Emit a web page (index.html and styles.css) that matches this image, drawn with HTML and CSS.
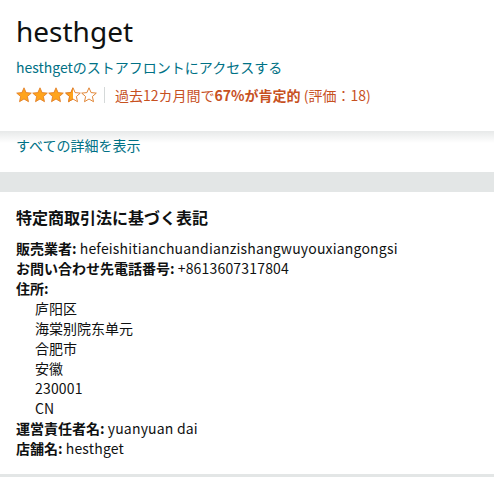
FILE: index.html
```html
<!DOCTYPE html>
<html lang="ja">
<head>
<meta charset="utf-8">
<link rel="stylesheet" href="styles.css">
</head>
<body>
<section class="header">
  <h1 class="title">hesthget</h1>
  <a class="store-link">hesthgetのストアフロントにアクセスする</a>
  <div class="rating">
    <span class="stars">
      <svg width="82" height="16" viewBox="0 0 82 16">
        <defs>
          <path id="st" d="M8 0.8 L10.1 5.6 L15.3 6.1 L11.4 9.5 L12.5 14.7 L8 12 L3.5 14.7 L4.6 9.5 L0.7 6.1 L5.9 5.6 Z"/>
          <clipPath id="half"><rect x="0" y="0" width="8" height="16"/></clipPath>
        </defs>
        <use href="#st" x="0" fill="#ffa41c" stroke="#de7921" stroke-width="0.8"/>
        <use href="#st" x="16" fill="#ffa41c" stroke="#de7921" stroke-width="0.8"/>
        <use href="#st" x="32" fill="#ffa41c" stroke="#de7921" stroke-width="0.8"/>
        <g transform="translate(49 0)">
          <use href="#st" fill="#fff" stroke="#de7921" stroke-width="0.9"/>
          <use href="#st" fill="#ffa41c" stroke="#de7921" stroke-width="0.8" clip-path="url(#half)"/>
        </g>
        <use href="#st" x="65" fill="#fff" stroke="#de7921" stroke-width="0.9"/>
      </svg>
    </span>
    <span class="sep"></span>
    <span class="feedback">過去12カ月間で<b>67%が肯定的</b> (評価：18)</span>
  </div>
</section>
<div class="shadow-bar">
  <a class="details-link">すべての詳細を表示</a>
</div>
<div class="gap"></div>
<section class="legal">
  <h2 class="legal-title">特定商取引法に基づく表記</h2>
  <div class="row"><b>販売業者:</b> <span class="lat">hefeishitianchuandianzishangwuyouxiangongsi</span></div>
  <div class="row"><b>お問い合わせ先電話番号:</b> <span class="lat">+8613607317804</span></div>
  <div class="row"><b>住所:</b></div>
  <div class="addr">
    <div class="row">庐阳区</div>
    <div class="row">海棠别院东单元</div>
    <div class="row">合肥市</div>
    <div class="row">安徽</div>
    <div class="row lat">230001</div>
    <div class="row lat">CN</div>
  </div>
  <div class="row"><b>運営責任者名:</b> <span class="lat">yuanyuan dai</span></div>
  <div class="row"><b>店舗名:</b> <span class="lat">hesthget</span></div>
</section>
<div class="bottom-line"></div>
</body>
</html>
```
FILE: styles.css
```css
* { box-sizing: border-box; }
html, body { margin: 0; padding: 0; background: #fff; }
body {
  font-family: "Noto Sans CJK JP", "Noto Sans", sans-serif;
  color: #0f1111;
  font-size: 14px;
  width: 494px;
  overflow: hidden;
}
.header { padding: 14px 16px 0 16px; height: 131px; }
.title {
  margin: 0;
  font-size: 28px;
  font-weight: 400;
  line-height: 35px;
  font-family: "Noto Sans", "Noto Sans CJK JP", sans-serif;
}
.store-link {
  display: block;
  margin-top: 8px;
  color: #007185;
  font-size: 14px;
  line-height: 20px;
}
.rating {
  display: flex;
  align-items: center;
  margin-top: 8px;
  height: 20px;
}
.stars { display: flex; }
.stars svg { display: block; }
.sep {
  width: 1px;
  height: 16px;
  background: #d5d9d9;
  margin: 0 10px 0 6px;
}
.feedback { color: #c7511f; font-size: 14px; line-height: 20px; }
.feedback b { font-weight: 700; }
.shadow-bar {
  background: linear-gradient(#e7e9e9, #fff 12px);
  padding: 4px 16px 0;
  height: 41px;
}
.details-link { color: #007185; font-size: 14px; line-height: 20px; display: block; }
.gap { height: 20px; background: #e3e6e6; }
.legal { padding: 14px 16px 0; height: 282px; }
.legal-title {
  margin: 0 0 10px;
  font-size: 16px;
  font-weight: 700;
  line-height: 22px;
}
.row { line-height: 20px; font-size: 14px; }
.row b { font-weight: 700; }
.lat { letter-spacing: 0.18px; }
.addr { padding-left: 19px; }
.bottom-line { height: 4px; background: #e3e6e6; }
```
